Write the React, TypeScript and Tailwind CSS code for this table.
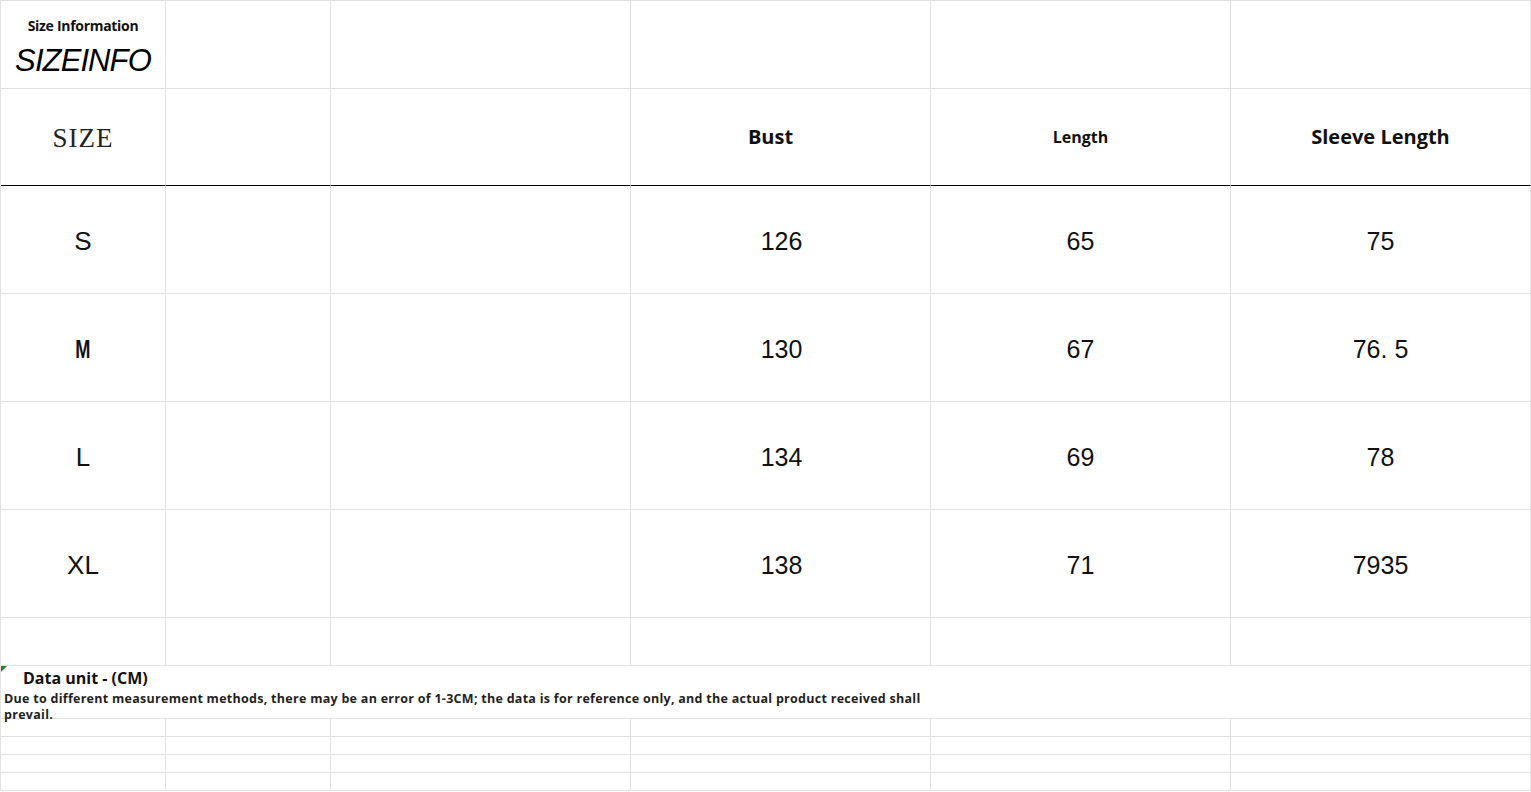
import React from "react";

const cell = "border-r border-b border-[#e2e2e2] flex items-center justify-center";

export default function App() {
  const widths = ["w-[165px]", "w-[165px]", "w-[300px]", "w-[300px]", "w-[300px]", "w-[300px]"];
  const rows: { size: React.ReactNode; bust: string; length: string; sleeve: string }[] = [
    { size: <span>S</span>, bust: "126", length: "65", sleeve: "75" },
    { size: <span className="inline-block font-bold scale-x-[0.7]">M</span>, bust: "130", length: "67", sleeve: "76. 5" },
    { size: <span>L</span>, bust: "134", length: "69", sleeve: "78" },
    { size: <span>XL</span>, bust: "138", length: "71", sleeve: "7935" },
  ];
  const numFont = "font-['Liberation_Sans',Arial,sans-serif] text-[25px] text-[#111] pt-[4px]";
  const boldFont = "font-['Open_Sans','Liberation_Sans',sans-serif] font-bold text-[#111]";
  return (
    <div className="w-[1531px] h-[792px] bg-white overflow-hidden">
      <div className="grid grid-cols-[165px_165px_300px_300px_300px_300px] border-l border-t border-[#e2e2e2] w-[1531px]">
        {/* Row 1 */}
        <div className={`${cell} h-[88px] flex-col`}>
          <div className={`${boldFont} text-[14px] tracking-[-0.3px] leading-none mt-[5px]`}>Size Information</div>
          <div className="font-['Liberation_Sans',Arial,sans-serif] italic text-[31px] leading-none mt-[12px] text-black tracking-[-0.9px]">SIZEINFO</div>
        </div>
        <div className={`${cell} h-[88px]`} />
        <div className={`${cell} h-[88px]`} />
        <div className={`${cell} h-[88px]`} />
        <div className={`${cell} h-[88px]`} />
        <div className={`${cell} h-[88px]`} />
        {/* Row 2 */}
        <div className="border-r border-[#e2e2e2] border-b-black border-b h-[97px] flex items-center justify-center">
          <span className="font-['Liberation_Serif','Times_New_Roman',serif] text-[27px] text-[#222] tracking-[1px] font-light mt-[2px]">SIZE</span>
        </div>
        <div className="border-r border-[#e2e2e2] border-b border-b-black h-[97px]" />
        <div className="border-r border-[#e2e2e2] border-b border-b-black h-[97px]" />
        <div className="border-r border-[#e2e2e2] border-b border-b-black h-[97px] flex items-center justify-center">
          <span className={`${boldFont} text-[20px] mr-[20px]`}>Bust</span>
        </div>
        <div className="border-r border-[#e2e2e2] border-b border-b-black h-[97px] flex items-center justify-center">
          <span className={`${boldFont} text-[16px]`}>Length</span>
        </div>
        <div className="border-r border-[#e2e2e2] border-b border-b-black h-[97px] flex items-center justify-center">
          <span className={`${boldFont} text-[20px]`}>Sleeve Length</span>
        </div>
        {/* Data rows */}
        {rows.map((r, i) => (
          <React.Fragment key={i}>
            <div className={`${cell} h-[108px] font-['Liberation_Sans',Arial,sans-serif] text-[26px] text-[#111] pt-[4px]`}>{r.size}</div>
            <div className={`${cell} h-[108px]`} />
            <div className={`${cell} h-[108px]`} />
            <div className={`${cell} h-[108px] ${numFont}`}><span className="ml-[2px]">{r.bust}</span></div>
            <div className={`${cell} h-[108px] ${numFont}`}>{r.length}</div>
            <div className={`${cell} h-[108px] ${numFont}`}>{r.sleeve}</div>
          </React.Fragment>
        ))}
        {/* Empty row */}
        {widths.map((_, i) => (
          <div key={"e" + i} className={`${cell} h-[48px]`} />
        ))}
        {/* Note row */}
        <div className="col-span-6 relative h-[53px] border-r border-b border-[#e2e2e2] overflow-visible z-10">
          <div className="absolute left-0 top-0 w-0 h-0 border-t-[6px] border-t-[#2e7d32] border-r-[6px] border-r-transparent" />
          <div className={`${boldFont} text-[16px] leading-none pl-[22px] pt-[4px]`}>Data unit - (CM)</div>
          <div className={`${boldFont} text-[12.5px] leading-[16px] pl-[3px] pt-[5px] text-[#231f20] tracking-[0.28px]`}>
            <span className="whitespace-nowrap">Due to different measurement methods, there may be an error of 1-3CM; the data is for reference only, and the actual product received shall</span>
            <br />
            prevail.
          </div>
        </div>
        {/* Small rows */}
        {[0, 1, 2, 3].map((k) =>
          widths.map((_, i) => <div key={`s${k}-${i}`} className={`${cell} h-[18px]`} />)
        )}
      </div>
    </div>
  );
}
